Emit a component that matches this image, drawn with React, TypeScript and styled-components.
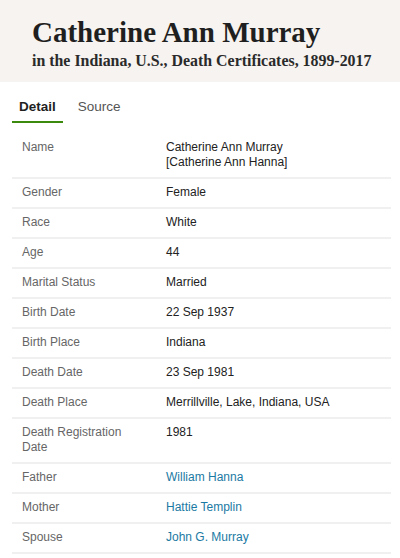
import React from 'react'
import styled, { createGlobalStyle } from 'styled-components'

const GlobalStyle = createGlobalStyle`
    html, body {
        margin: 0;
        padding: 0;
        background: #ffffff;
    }
    body {
        font-family: 'Liberation Sans', Arial, sans-serif;
        color: #222222;
    }
`

interface Fact {
    label: string
    value: string[]
    link?: boolean
}

const facts: Fact[] = [
    { label: 'Name', value: ['Catherine Ann Murray', '[Catherine Ann Hanna]'] },
    { label: 'Gender', value: ['Female'] },
    { label: 'Race', value: ['White'] },
    { label: 'Age', value: ['44'] },
    { label: 'Marital Status', value: ['Married'] },
    { label: 'Birth Date', value: ['22 Sep 1937'] },
    { label: 'Birth Place', value: ['Indiana'] },
    { label: 'Death Date', value: ['23 Sep 1981'] },
    { label: 'Death Place', value: ['Merrillville, Lake, Indiana, USA'] },
    { label: 'Death Registration Date', value: ['1981'] },
    { label: 'Father', value: ['William Hanna'], link: true },
    { label: 'Mother', value: ['Hattie Templin'], link: true },
    { label: 'Spouse', value: ['John G. Murray'], link: true },
]

const tabs = ['Detail', 'Source']

const App = () => {
    const [active, setActive] = React.useState('Detail')
    return (
        <Page>
            <GlobalStyle />
            <Header>
                <Title>Catherine Ann Murray</Title>
                <Subtitle>in the Indiana, U.S., Death Certificates, 1899-2017</Subtitle>
            </Header>
            <Body>
                <TabBar>
                    {tabs.map((t) => (
                        <Tab key={t} active={t === active} onClick={() => setActive(t)}>
                            {t}
                        </Tab>
                    ))}
                </TabBar>
                <Table>
                    {facts.map((f) => (
                        <Row key={f.label}>
                            <Label>{f.label}</Label>
                            <Value>
                                {f.value.map((v) =>
                                    f.link ? (
                                        <LinkText key={v} href='#'>
                                            {v}
                                        </LinkText>
                                    ) : (
                                        <Line key={v}>{v}</Line>
                                    )
                                )}
                            </Value>
                        </Row>
                    ))}
                </Table>
            </Body>
        </Page>
    )
}

interface TabProps {
    active?: boolean
}

const Page = styled.div`
    width: 400px;
    min-height: 558px;
    overflow: hidden;
`
const Header = styled.header`
    background: #f6f3f0;
    padding: 16px 16px 0 32px;
    height: 82px;
    box-sizing: border-box;
`
const Title = styled.h1`
    margin: 0;
    font-family: 'Liberation Serif', 'Times New Roman', serif;
    font-weight: bold;
    font-size: 29px;
    line-height: 33px;
    color: #1f1f1f;
`
const Subtitle = styled.p`
    margin: 2px 0 0 0;
    font-family: 'Liberation Serif', 'Times New Roman', serif;
    font-weight: bold;
    font-size: 15.9px;
    line-height: 20px;
    color: #2a2a2a;
`
const Body = styled.div`
    padding: 0 9px 0 12px;
`
const TabBar = styled.nav`
    display: flex;
    gap: 8px;
    padding-top: 17px;
    margin-bottom: 11px;
`
const Tab = styled.button<TabProps>`
    background: none;
    border: none;
    border-bottom: 2px solid ${(props) => (props.active ? '#3b8a0e' : 'transparent')};
    padding: 0 7px 6px 7px;
    font-family: 'Liberation Sans', Arial, sans-serif;
    font-size: 13.5px;
    line-height: 16px;
    font-weight: ${(props) => (props.active ? 'bold' : 'normal')};
    color: ${(props) => (props.active ? '#1f1f1f' : '#555555')};
    cursor: pointer;
`
const Table = styled.div`
    display: flex;
    flex-direction: column;
`
const Row = styled.div`
    display: grid;
    grid-template-columns: 154px 1fr;
    padding: 6px 0 7px 0;
    border-bottom: 2px solid #f0f0f0;
    font-size: 12px;
    line-height: 15px;
`
const Label = styled.div`
    padding: 0 20px 0 10px;
    color: #666666;
`
const Value = styled.div`
    display: flex;
    flex-direction: column;
    color: #222222;
`
const Line = styled.span``
const LinkText = styled.a`
    color: #1b7aa3;
    text-decoration: none;
`

export default App
